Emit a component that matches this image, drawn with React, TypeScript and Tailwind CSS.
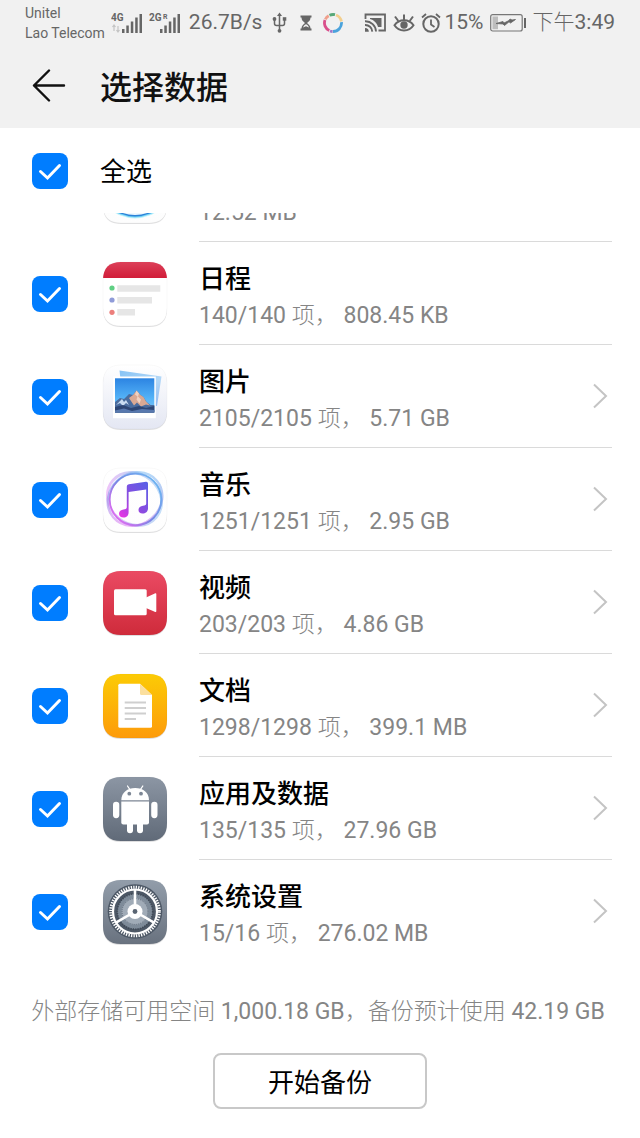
import React, { useState } from 'react';

interface BackupItem {
  id: string;
  title?: string;
  count?: string;
  size: string;
  icon: React.ReactNode;
  hasArrow: boolean;
}

const TILE = 'M18 0H46C58 0 64 6 64 18V46C64 58 58 64 46 64H18C6 64 0 58 0 46V18C0 6 6 0 18 0Z';

interface TileProps {
  id: string;
  from: string;
  to: string;
  children: React.ReactNode;
}

// Rounded launcher tile shared by all the category icons
const Tile: React.FC<TileProps> = ({ id, from, to, children }) => (
  <svg viewBox="0 0 64 64" className="size-16 shrink-0 overflow-visible" aria-hidden="true">
    <defs>
      <linearGradient id={`${id}-bg`} x1="0" y1="0" x2="0" y2="1">
        <stop offset="0" stopColor={from} />
        <stop offset="1" stopColor={to} />
      </linearGradient>
      <clipPath id={`${id}-clip`}>
        <path d={TILE} />
      </clipPath>
    </defs>
    <path d={TILE} fill="#9a9aa0" opacity="0.3" transform="translate(0 1)" />
    <path d={TILE} fill={`url(#${id}-bg)`} stroke="#000" strokeOpacity="0.05" strokeWidth="0.6" />
    <g clipPath={`url(#${id}-clip)`}>{children}</g>
  </svg>
);

const RecorderIcon = () => (
  <Tile id="recorder" from="#ffffff" to="#fdfdfd">
    <circle cx="32" cy="21.5" r="38" fill="#c3f2fb" />
    <circle cx="32" cy="20.5" r="38" fill="#6fd0f5" />
    <circle cx="32" cy="19.5" r="38" fill="#2c83d8" />
    <circle cx="32" cy="18" r="38" fill="#eef8fe" />
  </Tile>
);

const CalendarIcon = () => (
  <Tile id="calendar" from="#ffffff" to="#ffffff">
    <defs>
      <linearGradient id="calendar-top" x1="0" y1="0" x2="0" y2="1">
        <stop offset="0" stopColor="#dc4059" />
        <stop offset="1" stopColor="#d11d39" />
      </linearGradient>
    </defs>
    <rect width="64" height="16" fill="url(#calendar-top)" />
    <circle cx="9" cy="26" r="2.6" fill="#5fcf83" />
    <circle cx="9" cy="38" r="2.6" fill="#8f9bd8" />
    <circle cx="9" cy="50.3" r="2.6" fill="#ec7f7c" />
    <path d="M14.3 23.3h43v6.4h-43zM14.3 35h34.7v6.4H14.3zM14.3 47h17.7v6.4H14.3z" fill="#e6e6e6" />
  </Tile>
);

const GalleryIcon = () => (
  <Tile id="gallery" from="#ffffff" to="#e4e7f3">
    <defs>
      <linearGradient id="gallery-sky" x1="0" y1="0" x2="0" y2="1">
        <stop offset="0" stopColor="#2c84e2" />
        <stop offset="0.6" stopColor="#55b4f8" />
        <stop offset="1" stopColor="#7fc4f5" />
      </linearGradient>
      <linearGradient id="gallery-back" x1="0" y1="0" x2="1" y2="1">
        <stop offset="0" stopColor="#86c3f5" />
        <stop offset="0.6" stopColor="#b3d8f7" />
        <stop offset="1" stopColor="#8fb6f0" />
      </linearGradient>
    </defs>
    <path d="M16.5 5.5L58.5 11.5L54 41L20 36Z" fill="url(#gallery-back)" />
    <rect x="10" y="11.5" width="42.8" height="41.7" fill="#ffffff" />
    <rect x="12" y="13.3" width="39.3" height="34.2" fill="url(#gallery-sky)" />
    <path d="M12 37l5-4 4 1 5-5 4 1 3.5-4.5 4 4.5 3 2 3 5 4 3 3.8 0V47.5H12z" fill="#4a6c9e" />
    <path d="M26 33l4-3 3.5-4.5 4 4.5 3 2 2.5 4.5 4 4-4-1-5 2-4-4-3 3z" fill="#d9a994" />
    <path d="M33.5 25.5l2.5 3-1 3 3 3-1.5 4-3-4 1-3-2.5-2z" fill="#f0d2c2" />
    <path d="M19 34l2 3 2-2 3 5-3-2-3 3-3-3-4 2z" fill="#c9dcf2" />
    <path d="M12 42l8-2 8 3 8-2 7 2 8.3-2v6.5H12z" fill="#2d4675" />
    <path d="M12 45.5l9-2 8 2.5 10-2 12.3 1v2.5H12z" fill="#5878ae" />
  </Tile>
);

const MusicIcon = () => (
  <Tile id="music" from="#ffffff" to="#fefefe">
    <defs>
      <linearGradient id="music-ring" x1="0.9" y1="0.1" x2="0.1" y2="0.8">
        <stop offset="0" stopColor="#6db7f2" />
        <stop offset="0.55" stopColor="#7687e4" />
        <stop offset="1" stopColor="#d66df0" />
      </linearGradient>
      <linearGradient id="music-note" x1="0.9" y1="0" x2="0.1" y2="1">
        <stop offset="0" stopColor="#5a5fe6" />
        <stop offset="0.55" stopColor="#8b4be0" />
        <stop offset="1" stopColor="#e735e4" />
      </linearGradient>
    </defs>
    <g fill="none" stroke="url(#music-ring)">
      <ellipse cx="31.5" cy="31" rx="28.5" ry="25" strokeWidth="2.8" opacity="0.4" transform="rotate(40 31.5 31)" />
      <ellipse cx="32" cy="31" rx="28.5" ry="25.5" strokeWidth="2.4" opacity="0.5" transform="rotate(-40 32 31)" />
      <circle cx="32.5" cy="31.5" r="25.8" strokeWidth="1.8" />
    </g>
    <path
      d="M23.8 18.5Q23.8 16.5 25.8 16.2L43 13.8Q45 13.6 45 15.5V40.5C45 43.5 42.5 45.500 39.5 45.5C37 45.5 35.5 44 35.5 42C35.5 39.5 37.5 38 40 37.7C42.3 37.5 43.2 37 43.2 35.5V21.5L25.6 24V44.5C25.6 47.5 23.5 49.6 20.5 49.6C17.8 49.6 16 48 16 45.8C16 43.3 18 41.8 20.5 41.5C23 41.3 23.8 40.7 23.8 39Z"
      fill="url(#music-note)"
    />
  </Tile>
);

const VideoIcon = () => (
  <Tile id="video" from="#ea4a63" to="#cf2b3b">
    <rect x="11" y="18.3" width="32.7" height="26" rx="1.5" fill="#fff" />
    <path d="M43 26.4L52.3 22.3Q53.3 22 53.3 23V40.3Q53.3 41.3 52.3 41L43 37Z" fill="#fff" />
  </Tile>
);

const DocumentIcon = () => (
  <Tile id="document" from="#fccb05" to="#fd9b0b">
    <path d="M16.8 9.7H37L49 21V52.2Q49 53.7 47.5 53.7H16.8Q15.3 53.7 15.3 52.2V11.2Q15.3 9.7 16.8 9.7Z" fill="#fff" />
    <path d="M37 9.7L49 21H38.5Q37 21 37 19.5Z" fill="#fbdf9e" />
    <path d="M21.7 28.5H43M21.7 34H43M21.7 39.5H43M21.7 45H33" stroke="#cfcfcf" strokeWidth="1.8" />
  </Tile>
);

const AppsIcon = () => (
  <Tile id="apps" from="#8c96a4" to="#606a78">
    <g fill="#fff">
      <path d="M18.3 23.2C18.3 15.5 24.5 11 32.2 11S46 15.5 46 23.2Z" />
      <path d="M18.3 24.6H46V45.5Q46 47.4 44 47.4H20.3Q18.3 47.4 18.3 45.5Z" />
      <rect x="10" y="24.8" width="6.3" height="16.4" rx="3.1" />
      <rect x="48.2" y="24.8" width="6.3" height="16.4" rx="3.1" />
      <rect x="24" y="42" width="6" height="14.3" rx="3" />
      <rect x="34" y="42" width="6" height="14.3" rx="3" />
    </g>
    <path d="M24.5 9L27.5 13.5M39.8 9L36.8 13.5" stroke="#fff" strokeWidth="1.3" strokeLinecap="round" />
    <circle cx="26.3" cy="16.7" r="1.9" fill="#7d8795" />
    <circle cx="38" cy="16.7" r="1.9" fill="#7d8795" />
  </Tile>
);

const SettingsIcon = () => (
  <Tile id="settings" from="#929daa" to="#69727f">
    <circle cx="32" cy="31.5" r="27.3" fill="#4d5866" />
    <circle cx="32" cy="31.5" r="24.3" fill="none" stroke="#fff" strokeWidth="3" strokeDasharray="1.3 1.245" />
    <circle cx="32" cy="31.5" r="22" fill="none" stroke="#fff" strokeWidth="2.2" />
    <circle cx="32" cy="31.5" r="17.5" fill="#7e8b99" />
    <circle cx="32" cy="31.5" r="17.8" fill="none" stroke="#3f4956" strokeWidth="1.8" strokeDasharray="1.2 1.2" />
    <circle cx="32" cy="31.5" r="13.5" fill="#a0abb7" />
    <circle cx="32" cy="31.5" r="13" fill="none" stroke="#5b6675" strokeWidth="1" strokeDasharray="1 1" />
    <path d="M32 31.5V10M32 31.5L13.4 42.3M32 31.5L50.6 42.3" stroke="#fff" strokeWidth="2.6" />
    <circle cx="32" cy="31.5" r="7.5" fill="#fff" />
    <circle cx="32" cy="31.5" r="2.4" fill="#5a6573" />
  </Tile>
);

const items: BackupItem[] = [
  { id: 'recorder', size: '12.52 MB', icon: <RecorderIcon />, hasArrow: false },
  { id: 'calendar', title: '日程', count: '140/140', size: '808.45 KB', icon: <CalendarIcon />, hasArrow: false },
  { id: 'gallery', title: '图片', count: '2105/2105', size: '5.71 GB', icon: <GalleryIcon />, hasArrow: true },
  { id: 'music', title: '音乐', count: '1251/1251', size: '2.95 GB', icon: <MusicIcon />, hasArrow: true },
  { id: 'video', title: '视频', count: '203/203', size: '4.86 GB', icon: <VideoIcon />, hasArrow: true },
  { id: 'document', title: '文档', count: '1298/1298', size: '399.1 MB', icon: <DocumentIcon />, hasArrow: true },
  { id: 'apps', title: '应用及数据', count: '135/135', size: '27.96 GB', icon: <AppsIcon />, hasArrow: true },
  { id: 'settings', title: '系统设置', count: '15/16', size: '276.02 MB', icon: <SettingsIcon />, hasArrow: true },
];

const allIds = items.map((i) => i.id);

interface CheckBoxProps {
  id: string;
  checked: boolean;
  onChange: () => void;
}

const CheckBox: React.FC<CheckBoxProps> = ({ id, checked, onChange }) => (
  <span className="grid size-9 shrink-0 place-items-center">
    <input
      id={id}
      type="checkbox"
      checked={checked}
      onChange={onChange}
      className="col-start-1 row-start-1 size-9 appearance-none rounded-lg border-2 border-gray-400 checked:border-0 checked:bg-[#007dff]"
    />
    {checked && (
      <svg viewBox="0 0 36 36" className="pointer-events-none col-start-1 row-start-1 size-9" aria-hidden="true">
        <path d="M8.5 18.5L15.5 25L27.5 12.5" fill="none" stroke="#fff" strokeWidth="3" strokeLinecap="round" />
      </svg>
    )}
  </span>
);

interface RowProps {
  item: BackupItem;
  checked: boolean;
  onToggle: (id: string) => void;
}

const Row: React.FC<RowProps> = ({ item, checked, onToggle }) => (
  <li className="group flex h-[103px] items-center pr-7 pl-8 first:-mt-[74px]">
    <CheckBox id={item.id} checked={checked} onChange={() => onToggle(item.id)} />
    <div className="ml-[35px]">{item.icon}</div>
    <div className="ml-8 flex flex-1 items-center justify-between self-stretch border-b border-[#dadada] group-last:border-transparent">
      <label htmlFor={item.id} className="flex flex-col pt-1.5">
        <span className="min-h-10 text-[26px] leading-10 font-medium text-black">{item.title}</span>
        <span className="text-[23px] leading-[34px] text-[#858585]">
          {item.count && (
            <>
              {item.count} <span className="font-light">项，</span>{' '}
            </>
          )}
          {item.size}
        </span>
      </label>
      {item.hasArrow && (
        <svg viewBox="0 0 16 26" className="mr-1 h-[26px] w-4" aria-hidden="true">
          <path d="M2 1.5L14 13L2 24.5" fill="none" stroke="#c4c4c4" strokeWidth="2" />
        </svg>
      )}
    </div>
  </li>
);

const SignalBars = () => (
  <g fill="#666">
    <rect x="11" y="17" width="2.5" height="4" />
    <rect x="15.3" y="13.5" width="2.5" height="7.5" />
    <rect x="19.8" y="9.5" width="2.5" height="11.5" />
    <rect x="24.2" y="5.5" width="2.5" height="15.5" />
    <rect x="28.5" y="2" width="2.5" height="19" />
  </g>
);

const StatusBar = () => (
  <div className="flex h-11 items-center justify-between px-[25px] pt-0.5 text-[21px] text-[#666]">
    <div className="flex items-center">
      <div className="text-[14px] leading-5 whitespace-nowrap">
        <p>Unitel</p>
        <p>Lao Telecom</p>
      </div>
      <svg viewBox="0 0 32 22" className="ml-1.5 h-[22px] w-8" aria-hidden="true">
        <text x="0" y="9" fontSize="10" fontWeight="700" fill="#666">4G</text>
        <path d="M3 13v6M1.500 15L3 13L4.500 15M7 14v6M5.500 18L7 20L8.500 18" fill="none" stroke="#c4c4c4" strokeWidth="1.2" />
        <SignalBars />
      </svg>
      <svg viewBox="0 0 32 22" className="ml-1.5 h-[22px] w-8" aria-hidden="true">
        <text x="0" y="9" fontSize="10" fontWeight="700" fill="#666">2G</text>
        <text x="14" y="7" fontSize="7" fontWeight="700" fill="#666">R</text>
        <SignalBars />
      </svg>
      <span className="ml-2">26.7B/s</span>
      <svg viewBox="0 0 16 22" className="ml-2.5 h-[22px] w-4" fill="none" stroke="#666" strokeWidth="1.5" aria-hidden="true">
        <path d="M7.5 3V18M2.5 8V11.5Q2.5 13.5 4.5 13.5H10.5Q12.5 13.5 12.5 11.5V8" />
        <path d="M7.5 0.500L10 4H5Z" fill="#666" stroke="none" />
        <circle cx="7.5" cy="18.8" r="1.9" fill="#666" stroke="none" />
        <circle cx="2.5" cy="7" r="1.9" fill="#666" stroke="none" />
        <rect x="10.8" y="5.2" width="3.5" height="3.5" fill="#666" stroke="none" />
      </svg>
      <svg viewBox="0 0 12 16" className="ml-3 h-4 w-3" fill="#666" aria-hidden="true">
        <path d="M0.500 0.500H11.500V2.500H10.500C10.500 5 9 6.500 7 8C9 9.500 10.500 11 10.500 13.500H11.500V15.500H0.500V13.500H1.500C1.500 11 3 9.500 5 8C3 6.500 1.500 5 1.500 2.500H0.500Z" />
        <path d="M6 9.3C4.5 10 3.5 11 3 12.5L6 11.200L9 12.5C8.5 11 7.5 10 6 9.3Z" fill="#f1f1f1" />
      </svg>
      <svg viewBox="0 0 20 20" className="ml-[11px] size-5" fill="none" strokeWidth="2.8" aria-hidden="true">
        <path d="M6.500 2.300A8.500 8.500 0 0 1 12 1.700" stroke="#57a878" />
        <path d="M13 2A8.500 8.500 0 0 1 18.400 8.500" stroke="#f3cf8e" />
        <path d="M18.500 9.200A8.500 8.500 0 0 1 10 18.500" stroke="#4ba3dc" />
        <path d="M9.600 18.500A8.500 8.500 0 0 1 7 18" stroke="#a078c8" />
        <path d="M6.300 17.600A8.500 8.500 0 0 1 2 7" stroke="#d94f8b" />
        <path d="M2.300 6.300A8.500 8.500 0 0 1 5.700 2.700" stroke="#f0a08c" />
      </svg>
    </div>
    <div className="flex items-center">
      <svg viewBox="0 0 23 20" className="h-5 w-[23px]" fill="none" stroke="#666" aria-hidden="true">
        <path d="M1.500 6V1.500H21V17.500H14.500" strokeWidth="1.800" />
        <path d="M6 5H17.500V14H14C13 10 10 7 6 6Z" fill="#666" stroke="none" />
        <path d="M1 8.300A10.500 10.500 0 0 1 12 18.600M1 12A7 7 0 0 1 8.300 18.600" strokeWidth="1.900" />
        <path d="M1 15V18.800H4.800A3.800 3.800 0 0 0 1 15Z" fill="#666" stroke="none" />
      </svg>
      <svg viewBox="0 0 22 20" className="ml-1.5 h-5 w-[22px]" fill="none" stroke="#666" strokeWidth="2" aria-hidden="true">
        <path d="M1.500 12.300C6 5.500 16 5.500 20.500 12.300C16 19.200 6 19.200 1.500 12.300Z" />
        <circle cx="11" cy="12" r="3.700" fill="#666" stroke="none" />
        <path d="M11 7V1.500M5.300 8L2 3.500M16.700 8L20 3.500" />
      </svg>
      <svg viewBox="0 0 20 20" className="ml-1.5 size-5" fill="none" stroke="#666" strokeWidth="2" aria-hidden="true">
        <circle cx="10" cy="11" r="7.700" />
        <path d="M10 6.500V11.500L13.500 14M1 4.500L5 1M19 4.500L15 1" strokeWidth="1.800" />
      </svg>
      <span className="ml-1">15%</span>
      <svg viewBox="0 0 37 18" className="ml-1.5 h-[18px] w-[37px]" aria-hidden="true">
        <rect x="0.700" y="0.700" width="31.500" height="16.300" rx="2" fill="none" stroke="#777" strokeWidth="1.200" />
        <rect x="2.500" y="2.500" width="5.500" height="12.700" fill="#bdbdbd" />
        <path d="M6 9.500L13 7.500L14 9L19 6.500L20 5L22 6L25.500 5.500L20.500 9L19 7.800L14.500 11.500L13 10Z" fill="#666" stroke="#666" strokeWidth="0.800" />
        <rect x="34" y="4" width="2" height="10" fill="#666" />
      </svg>
      <span className="ml-1.5">
        <span className="font-light">下午</span>3:49
      </span>
    </div>
  </div>
);

const App: React.FC = () => {
  const [selected, setSelected] = useState<string[]>(allIds);

  const toggle = (id: string) => {
    setSelected(selected.includes(id) ? selected.filter((s) => s !== id) : [...selected, id]);
  };

  const allSelected = selected.length === allIds.length;

  return (
    <div className="flex min-h-screen flex-col bg-white font-['Roboto','Noto_Sans_CJK_SC',sans-serif]">
      <header className="bg-[#f1f1f1]">
        <StatusBar />
        <div className="flex h-21 items-center pl-8">
          <button type="button" aria-label="返回">
            <svg viewBox="0 0 34 34" className="size-[34px]" fill="none" stroke="#111" strokeWidth="2.4" strokeLinecap="round" strokeLinejoin="round" aria-hidden="true">
              <path d="M32 16.5H2M17 1.5L2 16.5L17 31.5" />
            </svg>
          </button>
          <h1 className="ml-[34px] pt-1 text-[32px] leading-10 font-medium text-[#111]">选择数据</h1>
        </div>
      </header>

      <main>
        <div className="flex h-[85px] items-center pl-8">
          <CheckBox id="all" checked={allSelected} onChange={() => setSelected(allSelected ? [] : allIds)} />
          <label htmlFor="all" className="ml-8 pt-0.5 text-[26px] leading-10 text-black">全选</label>
        </div>

        {/* the list is scrolled, only the bottom of its first row shows */}
        <ul className="overflow-hidden">
          {items.map((item) => (
            <Row key={item.id} item={item} checked={selected.includes(item.id)} onToggle={toggle} />
          ))}
        </ul>
      </main>

      <footer className="flex flex-col items-center pt-[31px]">
        <p className="pr-1 text-[23px] leading-9 whitespace-nowrap text-[#858585]">
          <span className="font-light">外部存储可用空间</span> 1,000.18 GB<span className="font-light">，备份预计使用</span> 42.19 GB
        </p>
        <button type="button" className="mt-[23px] mb-7 h-14 w-1/3 rounded-lg border-2 border-[#c8c8c8] pt-1 text-[26px] text-black">
          开始备份
        </button>
      </footer>
    </div>
  );
};

export default App;
